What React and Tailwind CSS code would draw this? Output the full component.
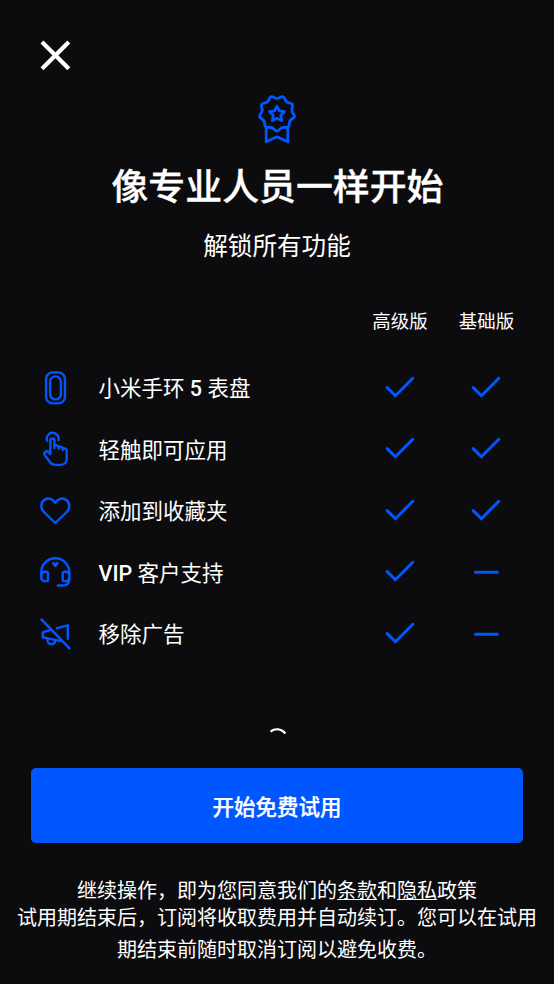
import clsx from 'clsx';

const features = [
  {
    id: 'faces',
    label: (
      <>
        小米手环 <span className="font-medium">5</span> 表盘
      </>
    ),
    Icon: BandIcon,
    premium: true,
    basic: true,
  },
  { id: 'tap', label: '轻触即可应用', Icon: TapIcon, premium: true, basic: true },
  { id: 'favorites', label: '添加到收藏夹', Icon: HeartIcon, premium: true, basic: true },
  {
    id: 'support',
    label: (
      <>
        <span className="font-medium">VIP</span> 客户支持
      </>
    ),
    Icon: SupportIcon,
    premium: true,
    basic: false,
  },
  { id: 'ads', label: '移除广告', Icon: NoAdsIcon, premium: true, basic: false },
];

export default function App() {
  return (
    <div className="flex h-[984px] w-full flex-col overflow-hidden bg-[#0c0c0e] font-[Roboto,'Noto_Sans_CJK_SC',sans-serif] text-white">
      <header className="flex h-[94px] shrink-0 pt-[39px] pl-[39px]">
        <button className="h-8 w-8" aria-label="关闭">
          <svg width="32" height="32" viewBox="0 0 32 32" fill="none" stroke="currentColor" strokeWidth="4.2">
            <path d="M3 3 29.8 29.8M29.8 3 3 29.8" />
          </svg>
        </button>
      </header>

      <div className="flex shrink-0 flex-col items-center">
        <AwardIcon />
        <h1 className="mt-[17px] pl-px text-[36.9px] leading-[50px] font-medium [-webkit-text-stroke:0.3px_white]">
          像专业人员一样开始
        </h1>
        <p className="mt-[16px] text-[24.6px] leading-[36px]">解锁所有功能</p>
      </div>

      <section className="mt-[44px] flex shrink-0 flex-col pr-[25px] pl-[38px]">
        <div className="flex h-[28px] items-center justify-end text-[18.45px]">
          <span className="w-[86px] text-center">高级版</span>
          <span className="w-[86px] pl-px text-center">基础版</span>
        </div>
        <ul className="mt-[20px]">
          {features.map(({ id, label, Icon, premium, basic }) => (
            <li key={id} className="flex h-[61.5px] items-center">
              <Icon />
              <span className="ml-[24.5px] flex-1 pt-[3px] text-[21.5px] leading-[32px]">{label}</span>
              <Mark on={premium} className="w-[86px]" />
              <Mark on={basic} className="w-[86px]" />
            </li>
          ))}
        </ul>
      </section>

      <div className="mt-[55px] flex h-[30px] shrink-0 justify-center">
        <svg width="24" height="24" viewBox="0 0 24 24" fill="none" stroke="currentColor" strokeWidth="2.2">
          <path d="M5.5 11.6C10 8.2 15.8 8.6 20.4 13.4" />
        </svg>
      </div>

      <button className="mx-[31px] mt-[18px] h-[75px] shrink-0 rounded-[5px] bg-[#0057ff] pt-1.5 text-[21.5px] font-medium [-webkit-text-stroke:0.25px_white]">
        开始免费试用
      </button>

      <footer className="mt-[36px] text-center text-[20px]">
        <p className="leading-[24px]">
          继续操作，即为您同意我们的<Link>条款</Link>和<Link>隐私</Link>政策
        </p>
        <p className="-mt-px px-[10px] leading-[32px]">
          试用期结束后，订阅将收取费用并自动续订。您可以在试用
          <br />
          期结束前随时取消订阅以避免收费。
        </p>
      </footer>
    </div>
  );
}

function Link({ children }) {
  return (
    <a href="#" className="underline decoration-1 underline-offset-1">
      {children}
    </a>
  );
}

function Mark({ on, className }) {
  return (
    <span className={clsx('flex justify-center text-[#0057ff]', className)}>
      <svg width="32" height="32" viewBox="0 0 32 32" fill="none" stroke="currentColor" strokeWidth="3" strokeLinecap="round">
        {on ? <path d="M3.2 15.6 11.4 23.7 28.8 6.3" /> : <path d="M5.5 16.2H27.3" />}
      </svg>
    </span>
  );
}

function FeatureIcon({ children }) {
  return (
    <svg
      className="shrink-0 text-[#0057ff]"
      width="36"
      height="36"
      viewBox="0 0 36 36"
      fill="none"
      stroke="currentColor"
      strokeWidth="2.4"
      strokeLinecap="round"
      strokeLinejoin="round"
    >
      {children}
    </svg>
  );
}

function BandIcon() {
  return (
    <FeatureIcon>
      <rect x="8.1" y="2.4" width="18.8" height="31" rx="6.5" />
      <rect x="12.1" y="6.4" width="10.8" height="23" rx="5.4" />
    </FeatureIcon>
  );
}

function TapIcon() {
  return (
    <FeatureIcon>
      <path d="M9 9.6a6 6 0 1 1 11.6-.6" />
      <path d="M12.4 22.5V9.4a2 2 0 0 1 4 0V17M16.4 14.4c2.4-.6 4.2.3 4.4 2.2v1.2M20.8 15.8c2.2-.4 3.8.4 4 2.1v1.2M24.8 17.2c2.2-.3 3.9.9 3.9 2.8v7.2c0 4.2-2.6 6.7-6.6 6.7h-4.8c-2.6 0-4-1-5.4-2.8L7 24.6c-1-1.5-.7-3 .4-3.8 1-.8 2.2-.5 3.2.4l1.8 1.9" />
    </FeatureIcon>
  );
}

function HeartIcon() {
  return (
    <FeatureIcon>
      <path d="M17.3 30 6.2 19.4C1.9 15.2 2.5 8.6 7.3 6.3c3.9-1.9 8 .1 10 3.5 2-3.4 6.1-5.4 10-3.5 4.8 2.3 5.4 8.9 1.1 13.1Z" />
    </FeatureIcon>
  );
}

function SupportIcon() {
  return (
    <FeatureIcon>
      <path d="M3.3 24.5v-6.2a14 14 0 0 1 28 0v6.6c0 4.4-2.6 6.6-6.4 6.6h-5" />
      <path d="M3.5 20c.6-1.6 1.8-2.3 3.4-2.3h1.3c1 0 1.7.7 1.7 1.7v6c0 1-.7 1.7-1.7 1.7H6.9c-1.6 0-2.8-.8-3.4-2.4M31.1 20c-.6-1.6-1.8-2.3-3.4-2.3h-1.3c-1 0-1.7.7-1.7 1.7v6c0 1 .7 1.7 1.7 1.7h1.3c1.6 0 2.8-.8 3.4-2.4" />
      <path
        d="m17.3 13.5-2.8-2.7c-1.4-1.4.1-3.4 1.7-2.6.6.3.9.6 1.1 1 .2-.4.5-.7 1.1-1 1.6-.8 3.1 1.2 1.7 2.6Z"
        fill="currentColor"
        stroke="none"
      />
    </FeatureIcon>
  );
}

function NoAdsIcon() {
  return (
    <FeatureIcon>
      <path d="M3.4 3.4 31.5 32.3" />
      <path d="M12.5 13.8 4.8 16.4v5l18.4 3.7" />
      <path d="M9.4 22.6c-.2 3 1.3 5.2 3.4 5.5 2.4.3 4.4-1.4 4.6-3.7" />
      <path d="M19 12.2 29.8 9.3v13.5" />
    </FeatureIcon>
  );
}

// Rosette edge: control points alternate between nine bumps and nine dips,
// the curve itself runs through the midpoints.
function rosettePath(cx, cy, outer, inner) {
  const points = Array.from({ length: 18 }, (_, i) => {
    const angle = (i * 20 * Math.PI) / 180;
    const r = i % 2 ? outer : inner;
    return [cx + r * Math.sin(angle), cy - r * Math.cos(angle)];
  });
  const mid = (a, b) => `${((a[0] + b[0]) / 2).toFixed(2)} ${((a[1] + b[1]) / 2).toFixed(2)}`;
  const curves = points.map((p, i) => `Q${p[0].toFixed(2)} ${p[1].toFixed(2)} ${mid(p, points[(i + 1) % 18])}`);
  return `M${mid(points[17], points[0])}${curves.join('')}Z`;
}

function AwardIcon() {
  return (
    <svg
      className="text-[#0057ff]"
      width="40"
      height="52"
      viewBox="0 0 40 52"
      fill="none"
      stroke="currentColor"
      strokeWidth="2.8"
      strokeLinecap="round"
      strokeLinejoin="round"
    >
      <path d={rosettePath(20, 19.4, 19.2, 14.1)} />
      <path d="m20 12.2 2.3 4.7 5.2.8-3.7 3.6.8 5.3-4.6-2.3-4.6 2.3.8-5.3-3.7-3.6 5.2-.8Z" />
      <path d="M9.2 33v14.8L20 42.8l10.8 5V33" />
    </svg>
  );
}
